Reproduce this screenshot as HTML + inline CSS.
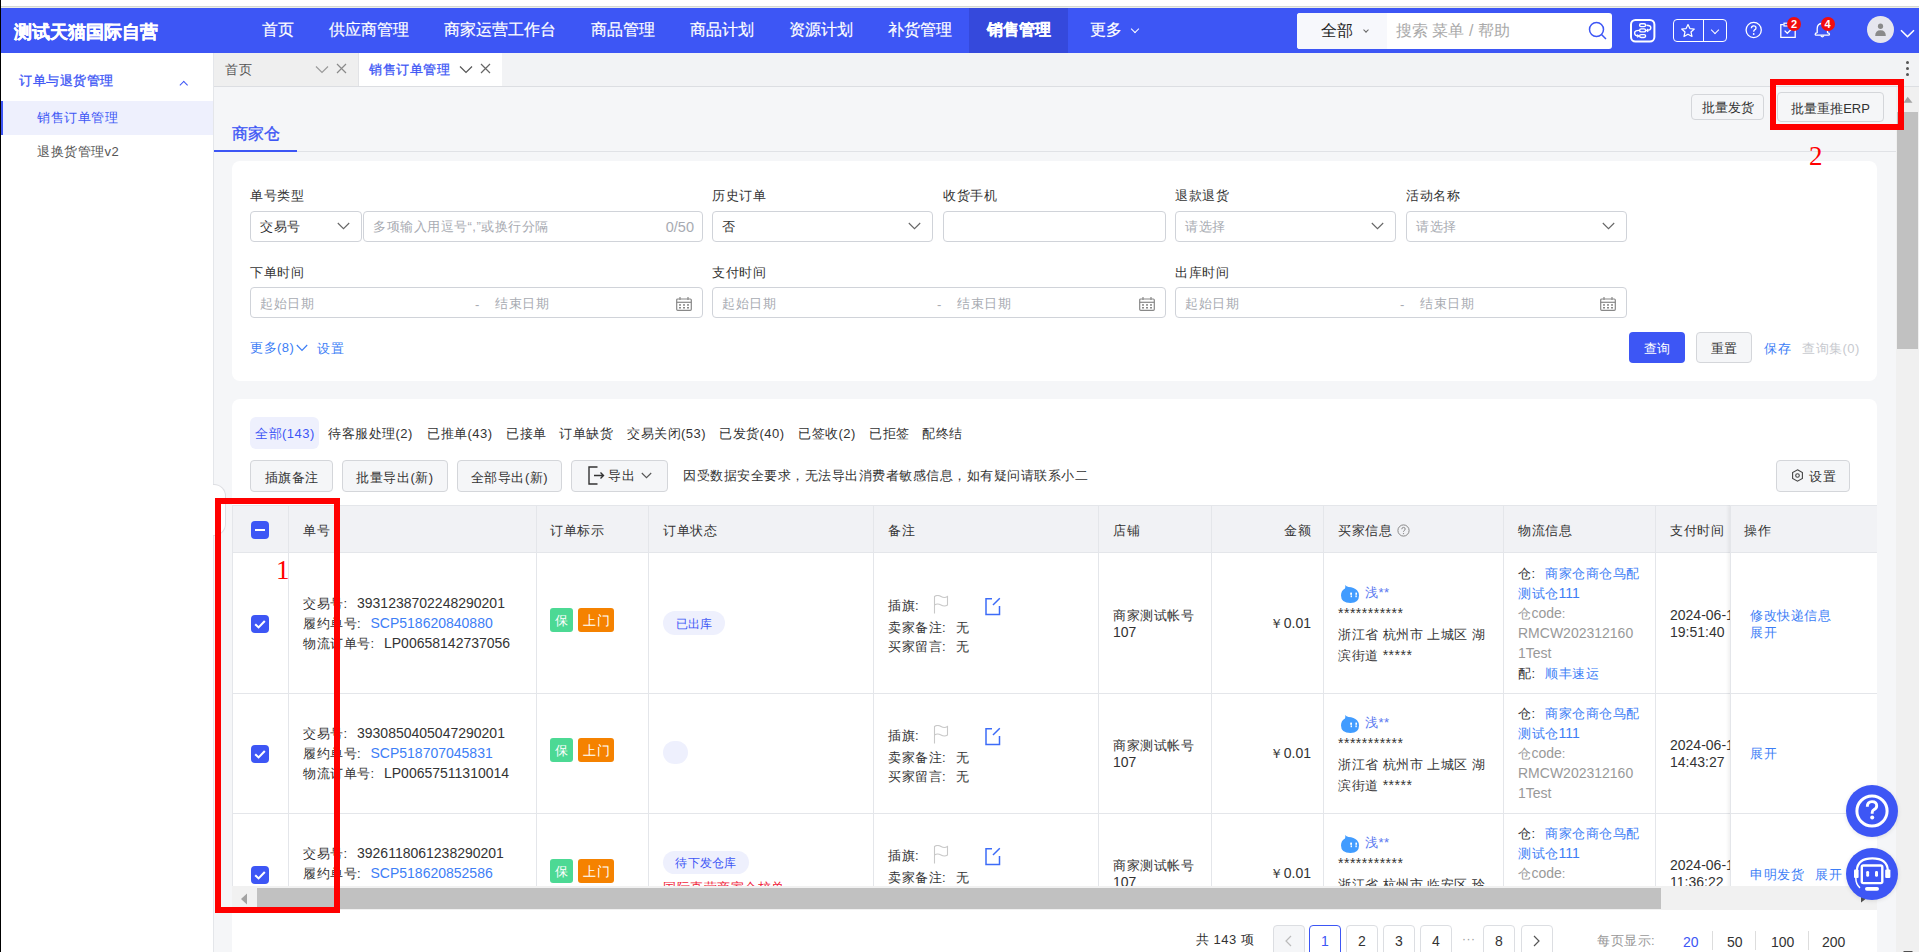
<!DOCTYPE html>
<html><head><meta charset="utf-8">
<style>
*{box-sizing:border-box;margin:0;padding:0}
html,body{width:1919px;height:952px;overflow:hidden}
body{position:relative;background:#f5f6f8;font-family:"Liberation Sans",sans-serif;color:#333;font-size:14px}
.a{position:absolute;white-space:nowrap}
#topstrip{left:0;top:0;width:1919px;height:8px;background:#fff}
#topline{left:0;top:6px;width:1919px;height:1px;background:#d6d8d4}
#topline2{left:0;top:7px;width:1919px;height:1px;background:#eceee6}
#hdr{left:0;top:8px;width:1919px;height:45px;background:#3d56f5}
#leftbar{left:0;top:0;width:1px;height:952px;background:#000;z-index:50}
.nav{top:7px;height:45px;line-height:45px;color:#fff;font-size:16px;-webkit-text-stroke:0.2px #fff}
#logo{left:14px;top:10px;height:45px;line-height:45px;color:#fff;font-size:18px;font-weight:bold;-webkit-text-stroke:0.3px #fff}
.btn{border:1px solid #d4d6da;border-radius:4px;background:#f5f6f8;text-align:center;color:#333}
.lbl{height:22px;line-height:22px;font-size:13px;letter-spacing:0.5px;color:#333}
.val{height:22px;line-height:22px;font-size:13px;letter-spacing:0.5px;color:#333}
.ph{height:22px;line-height:22px;font-size:13px;letter-spacing:0.5px;color:#a8abb2}
.lnk{height:22px;line-height:22px;font-size:13px;letter-spacing:0.5px;color:#3d7ef6}
.dis{height:22px;line-height:22px;font-size:13px;letter-spacing:0.5px;color:#c8cacf}
.inp{border:1px solid #d0d3d9;border-radius:4px;background:#fff}
.td{height:20px;line-height:20px;font-size:13px;letter-spacing:0.5px;color:#333}
.pg{top:925px;width:32px;height:32px;border:1px solid #dcdee2;border-radius:4px;background:#fff;text-align:center;line-height:31px;font-size:14px;color:#333}
.c{font-style:normal;display:inline-block;width:13.5px;letter-spacing:0}
.n{font-weight:normal;font-size:14px;letter-spacing:0;line-height:0}
</style></head><body>
<div class="a" id="topstrip"></div>
<div class="a" id="topline"></div>
<div class="a" id="topline2"></div>
<div class="a" id="hdr"></div>
<div class="a" id="logo">测试天猫国际自营</div>
<div class="a nav" style="left:262px">首页</div>
<div class="a nav" style="left:329px">供应商管理</div>
<div class="a nav" style="left:444px">商家运营工作台</div>
<div class="a nav" style="left:591px">商品管理</div>
<div class="a nav" style="left:690px">商品计划</div>
<div class="a nav" style="left:789px">资源计划</div>
<div class="a nav" style="left:888px">补货管理</div>
<div class="a" style="left:969px;top:8px;width:99px;height:45px;background:#3549dc"></div>
<div class="a nav" style="left:987px;font-weight:bold">销售管理</div>
<div class="a nav" style="left:1090px">更多</div>

<!-- header right -->
<div class="a" style="left:1132px;top:25.5px;width:6px;height:6px;border-right:1.6px solid #fff;border-bottom:1.6px solid #fff;transform:rotate(45deg)"></div>
<div class="a" style="left:1297px;top:13px;width:315px;height:36px;background:#fff;border-radius:3px"></div>
<div class="a" style="left:1297px;top:13px;width:90px;height:36px;background:#f7f8fc;border-radius:3px 0 0 3px"></div>
<div class="a" style="left:1321px;top:13px;height:36px;line-height:36px;font-size:16px;color:#222">全部</div>
<div class="a" style="left:1364px;top:28px;width:4px;height:4px;border-right:1px solid #666;border-bottom:1px solid #666;transform:rotate(45deg)"></div>
<div class="a" style="left:1396px;top:13px;height:36px;line-height:36px;font-size:16px;color:#aaa">搜索 菜单 / 帮助</div>
<svg class="a" style="left:1588px;top:21px" width="20" height="20" viewBox="0 0 20 20"><circle cx="8.5" cy="8.5" r="7" fill="none" stroke="#3d56f5" stroke-width="1.5"/><line x1="13.5" y1="13.5" x2="18" y2="18" stroke="#3d56f5" stroke-width="1.5"/></svg>
<!-- workflow icon -->
<svg class="a" style="left:1630px;top:19px" width="26" height="24" viewBox="0 0 26 24"><rect x="1" y="1" width="23.4" height="21.6" rx="4.5" fill="none" stroke="#fff" stroke-width="2"/><rect x="9.6" y="4.8" width="6" height="2.8" rx="1.4" fill="none" stroke="#fff" stroke-width="1.4"/><rect x="9.6" y="9.9" width="6" height="3" rx="1.5" fill="none" stroke="#fff" stroke-width="1.4"/><rect x="9.6" y="15.6" width="6" height="2.9" rx="1.45" fill="none" stroke="#fff" stroke-width="1.4"/><path d="M16.4 6.2 Q20.8 6.2 20.8 8.8 Q20.8 11.4 17 11.4" fill="none" stroke="#fff" stroke-width="1.4"/><path d="M18.2 10 L16.6 11.4 L18.2 12.8" fill="none" stroke="#fff" stroke-width="1.2"/><path d="M9 11.4 Q4.6 11.4 4.6 14.1 Q4.6 17 8.6 17" fill="none" stroke="#fff" stroke-width="1.4"/><path d="M7.2 15.6 L8.8 17 L7.2 18.4" fill="none" stroke="#fff" stroke-width="1.2"/></svg>
<!-- star group -->
<div class="a" style="left:1673px;top:19px;width:54px;height:23px;border:1px solid #fff;border-radius:4px"></div>
<div class="a" style="left:1703px;top:19px;width:1px;height:23px;background:#fff"></div>
<svg class="a" style="left:1680px;top:23px" width="16" height="16" viewBox="0 0 16 16"><path d="M8 1.5 L9.9 5.6 L14.3 6 L11 9 L12 13.5 L8 11.2 L4 13.5 L5 9 L1.7 6 L6.1 5.6 Z" fill="none" stroke="#fff" stroke-width="1.2" stroke-linejoin="round"/></svg>
<div class="a" style="left:1712px;top:26.5px;width:6px;height:6px;border-right:1.2px solid #fff;border-bottom:1.2px solid #fff;transform:rotate(45deg)"></div>
<!-- help -->
<svg class="a" style="left:1745px;top:21px" width="18" height="18" viewBox="0 0 18 18"><circle cx="8.7" cy="9" r="7.6" fill="none" stroke="#fff" stroke-width="1.3"/><path d="M6.4 7.2 Q6.4 4.8 8.7 4.8 Q11 4.8 11 6.9 Q11 8.2 9.6 8.9 Q8.7 9.4 8.7 10.8" fill="none" stroke="#fff" stroke-width="1.3"/><circle cx="8.7" cy="13" r="0.9" fill="#fff"/></svg>
<!-- clipboard -->
<svg class="a" style="left:1779px;top:21px" width="18" height="18" viewBox="0 0 18 18"><path d="M4.6 3.6 H1.8 V16.3 H16.2 V3.6 H13.4" fill="none" stroke="#fff" stroke-width="1.3"/><rect x="5" y="2.2" width="8" height="2.8" fill="none" stroke="#fff" stroke-width="1.2"/><path d="M5.6 9.6 L8.3 12.3 L12.6 8" fill="none" stroke="#fff" stroke-width="1.3"/></svg>
<div class="a" style="left:1787px;top:17px;width:14px;height:14px;border-radius:7px;background:#f20d0d;color:#fff;font-size:11px;line-height:14px;text-align:center;font-weight:bold">2</div>
<!-- bell -->
<svg class="a" style="left:1814px;top:21px" width="18" height="18" viewBox="0 0 18 18"><path d="M3.2 11.5 V7.5 Q3.2 2.5 8.35 2.5 Q13.5 2.5 13.5 7.5 V11.5 Q15.5 12 15.5 13.2 Q15.5 14.2 14.3 14.2 H2.4 Q1.2 14.2 1.2 13.2 Q1.2 12 3.2 11.5 Z" fill="none" stroke="#fff" stroke-width="1.3" stroke-linejoin="round"/><path d="M6.8 14.6 Q8.35 17 9.9 14.6" fill="none" stroke="#fff" stroke-width="1.2"/></svg>
<div class="a" style="left:1820.5px;top:17px;width:14px;height:14px;border-radius:7px;background:#f20d0d;color:#fff;font-size:11px;line-height:14px;text-align:center;font-weight:bold">4</div>
<!-- avatar -->
<div class="a" style="left:1867px;top:16px;width:27px;height:27px;border-radius:50%;background:#e6e6ee"></div>
<svg class="a" style="left:1872px;top:22px" width="17" height="15" viewBox="0 0 17 15"><path d="M5.9 4.3 Q5.9 1.6 8.5 1.6 Q11.1 1.6 11.1 4.3 Q11.1 7 8.5 7 Q5.9 7 5.9 4.3 Z" fill="#8a8a8a"/><path d="M3.2 14 Q3.2 8.2 8.5 8.2 Q13.8 8.2 13.8 14 Z" fill="#8a8a8a"/></svg>
<svg class="a" style="left:1899.5px;top:28.5px" width="15" height="9" viewBox="0 0 15 9"><path d="M1 1.2 L7.5 7.6 L14 1.2" fill="none" stroke="#fff" stroke-width="1.5"/></svg>
<!-- sidebar -->
<div class="a" style="left:0;top:53px;width:214px;height:899px;background:#fff;border-right:1px solid #e4e6ea"></div>
<div class="a" style="left:19px;top:70px;height:22px;line-height:22px;font-size:13px;letter-spacing:0.5px;color:#3d56f5;-webkit-text-stroke:0.3px #3d56f5">订单与退货管理</div>
<div class="a" style="left:180.5px;top:81.5px;width:5.5px;height:5.5px;border-left:1.1px solid #3d56f5;border-top:1.1px solid #3d56f5;transform:rotate(45deg)"></div>
<div class="a" style="left:1px;top:101px;width:212px;height:34px;background:#eef0fd;border-left:2px solid #3d56f5"></div>
<div class="a" style="left:37px;top:107px;height:22px;line-height:22px;font-size:13px;letter-spacing:0.5px;color:#3d56f5">销售订单管理</div>
<div class="a" style="left:37px;top:141px;height:22px;line-height:22px;font-size:13px;letter-spacing:0.5px;color:#555">退换货管理v2</div>
<!-- tab bar -->
<div class="a" style="left:214px;top:53px;width:1705px;height:34px;background:#f2f3f5;border-bottom:1px solid #dcdee2"></div>
<div class="a" style="left:214px;top:53px;width:144px;height:34px;background:#efefef;border-bottom:1px solid #dcdee2"></div>
<div class="a" style="left:225px;top:60px;height:20px;line-height:20px;font-size:13px;letter-spacing:0.5px;color:#555">首页</div>
<div class="a" style="left:358px;top:53px;width:144px;height:33px;background:#fff;border-left:1px solid #e2e3e6"></div>
<div class="a" style="left:369px;top:60px;height:20px;line-height:20px;font-size:13px;letter-spacing:0.5px;color:#3d56f5;-webkit-text-stroke:0.3px #3d56f5">销售订单管理</div>
<svg class="a" style="left:315px;top:65px" width="14" height="9" viewBox="0 0 14 9"><path d="M1 1.5 L7 7.5 L13 1.5" fill="none" stroke="#9a9a9a" stroke-width="1.2"/></svg>
<svg class="a" style="left:336px;top:63px" width="11" height="11" viewBox="0 0 11 11"><path d="M1 1 L10 10 M10 1 L1 10" fill="none" stroke="#8a8a8a" stroke-width="1.2"/></svg>
<svg class="a" style="left:459px;top:65px" width="14" height="9" viewBox="0 0 14 9"><path d="M1 1.5 L7 7.5 L13 1.5" fill="none" stroke="#555" stroke-width="1.2"/></svg>
<svg class="a" style="left:480px;top:63px" width="11" height="11" viewBox="0 0 11 11"><path d="M1 1 L10 10 M10 1 L1 10" fill="none" stroke="#666" stroke-width="1.2"/></svg>
<div class="a" style="left:1906px;top:61px;width:3px;height:3px;border-radius:2px;background:#555"></div>
<div class="a" style="left:1906px;top:67px;width:3px;height:3px;border-radius:2px;background:#555"></div>
<div class="a" style="left:1906px;top:73px;width:3px;height:3px;border-radius:2px;background:#555"></div>
<!-- sub tab -->
<div class="a" style="left:214px;top:151px;width:1683px;height:1px;background:#e0e2e6"></div>
<div class="a" style="left:232px;top:122px;height:24px;line-height:24px;font-size:16px;color:#3d56f5;-webkit-text-stroke:0.35px #3d56f5">商家仓</div>
<div class="a" style="left:214px;top:150px;width:83px;height:2px;background:#3d56f5"></div>
<div class="a btn" style="left:1691px;top:94px;width:73px;height:26px;line-height:26px;font-size:13px">批量发货</div>
<div class="a btn" style="left:1777px;top:92px;width:107px;height:30px;line-height:31px;font-size:13px">批量重推ERP</div>
<!-- filter card -->
<div class="a" style="left:232px;top:161px;width:1645px;height:220px;background:#fff;border-radius:8px"></div>
<div class="a lbl" style="left:250px;top:185px">单号类型</div>
<div class="a lbl" style="left:712px;top:185px">历史订单</div>
<div class="a lbl" style="left:943px;top:185px">收货手机</div>
<div class="a lbl" style="left:1175px;top:185px">退款退货</div>
<div class="a lbl" style="left:1406px;top:185px">活动名称</div>
<div class="a inp" style="left:250px;top:211px;width:112px;height:31px"></div>
<div class="a val" style="left:260px;top:216px">交易号</div>
<svg class="a" style="left:337px;top:222px" width="13" height="8" viewBox="0 0 13 8"><path d="M0.8 1 L6.5 6.7 L12.2 1" fill="none" stroke="#666" stroke-width="1.1"/></svg>
<div class="a inp" style="left:363px;top:211px;width:340px;height:31px"></div>
<div class="a ph" style="left:373px;top:216px">多项输入用逗号“,”或换行分隔</div>
<div class="a ph" style="left:600px;width:94px;text-align:right;top:216px;font-size:14.5px;letter-spacing:0">0/50</div>
<div class="a inp" style="left:712px;top:211px;width:221px;height:31px"></div>
<div class="a val" style="left:722px;top:216px">否</div>
<svg class="a" style="left:908px;top:222px" width="13" height="8" viewBox="0 0 13 8"><path d="M0.8 1 L6.5 6.7 L12.2 1" fill="none" stroke="#666" stroke-width="1.1"/></svg>
<div class="a inp" style="left:943px;top:211px;width:223px;height:31px"></div>
<div class="a inp" style="left:1175px;top:211px;width:221px;height:31px"></div>
<div class="a ph" style="left:1185px;top:216px">请选择</div>
<svg class="a" style="left:1371px;top:222px" width="13" height="8" viewBox="0 0 13 8"><path d="M0.8 1 L6.5 6.7 L12.2 1" fill="none" stroke="#666" stroke-width="1.1"/></svg>
<div class="a inp" style="left:1406px;top:211px;width:221px;height:31px"></div>
<div class="a ph" style="left:1416px;top:216px">请选择</div>
<svg class="a" style="left:1602px;top:222px" width="13" height="8" viewBox="0 0 13 8"><path d="M0.8 1 L6.5 6.7 L12.2 1" fill="none" stroke="#666" stroke-width="1.1"/></svg>
<div class="a lbl" style="left:250px;top:262px">下单时间</div>
<div class="a lbl" style="left:712px;top:262px">支付时间</div>
<div class="a lbl" style="left:1175px;top:262px">出库时间</div>
<div class="a inp" style="left:250px;top:287px;width:453px;height:31px"></div>
<div class="a ph" style="left:260px;top:293px">起始日期</div>
<div class="a ph" style="left:475px;top:294px">-</div>
<div class="a ph" style="left:495px;top:293px">结束日期</div>
<svg class="a" style="left:676px;top:297px" width="16" height="14" viewBox="0 0 16 14"><rect x="0.7" y="2" width="14.6" height="11.3" rx="1" fill="none" stroke="#888" stroke-width="1.2"/><line x1="0.7" y1="5.3" x2="15.3" y2="5.3" stroke="#888" stroke-width="1.2"/><line x1="4" y1="0" x2="4" y2="3" stroke="#888" stroke-width="1.2"/><line x1="12" y1="0" x2="12" y2="3" stroke="#888" stroke-width="1.2"/><rect x="3" y="7.2" width="2" height="1.5" fill="#888"/><rect x="7" y="7.2" width="2" height="1.5" fill="#888"/><rect x="11" y="7.2" width="2" height="1.5" fill="#888"/><rect x="3" y="10" width="2" height="1.5" fill="#888"/><rect x="7" y="10" width="2" height="1.5" fill="#888"/><rect x="11" y="10" width="2" height="1.5" fill="#888"/></svg>
<div class="a inp" style="left:712px;top:287px;width:454px;height:31px"></div>
<div class="a ph" style="left:722px;top:293px">起始日期</div>
<div class="a ph" style="left:937px;top:294px">-</div>
<div class="a ph" style="left:957px;top:293px">结束日期</div>
<svg class="a" style="left:1139px;top:297px" width="16" height="14" viewBox="0 0 16 14"><rect x="0.7" y="2" width="14.6" height="11.3" rx="1" fill="none" stroke="#888" stroke-width="1.2"/><line x1="0.7" y1="5.3" x2="15.3" y2="5.3" stroke="#888" stroke-width="1.2"/><line x1="4" y1="0" x2="4" y2="3" stroke="#888" stroke-width="1.2"/><line x1="12" y1="0" x2="12" y2="3" stroke="#888" stroke-width="1.2"/><rect x="3" y="7.2" width="2" height="1.5" fill="#888"/><rect x="7" y="7.2" width="2" height="1.5" fill="#888"/><rect x="11" y="7.2" width="2" height="1.5" fill="#888"/><rect x="3" y="10" width="2" height="1.5" fill="#888"/><rect x="7" y="10" width="2" height="1.5" fill="#888"/><rect x="11" y="10" width="2" height="1.5" fill="#888"/></svg>
<div class="a inp" style="left:1175px;top:287px;width:452px;height:31px"></div>
<div class="a ph" style="left:1185px;top:293px">起始日期</div>
<div class="a ph" style="left:1400px;top:294px">-</div>
<div class="a ph" style="left:1420px;top:293px">结束日期</div>
<svg class="a" style="left:1600px;top:297px" width="16" height="14" viewBox="0 0 16 14"><rect x="0.7" y="2" width="14.6" height="11.3" rx="1" fill="none" stroke="#888" stroke-width="1.2"/><line x1="0.7" y1="5.3" x2="15.3" y2="5.3" stroke="#888" stroke-width="1.2"/><line x1="4" y1="0" x2="4" y2="3" stroke="#888" stroke-width="1.2"/><line x1="12" y1="0" x2="12" y2="3" stroke="#888" stroke-width="1.2"/><rect x="3" y="7.2" width="2" height="1.5" fill="#888"/><rect x="7" y="7.2" width="2" height="1.5" fill="#888"/><rect x="11" y="7.2" width="2" height="1.5" fill="#888"/><rect x="3" y="10" width="2" height="1.5" fill="#888"/><rect x="7" y="10" width="2" height="1.5" fill="#888"/><rect x="11" y="10" width="2" height="1.5" fill="#888"/></svg>
<div class="a lnk" style="left:250px;top:337px">更多(8)</div>
<svg class="a" style="left:296px;top:344px" width="12" height="8" viewBox="0 0 12 8"><path d="M0.8 1 L6 6.3 L11.2 1" fill="none" stroke="#3d7ef6" stroke-width="1.2"/></svg>
<div class="a lnk" style="left:317px;top:338px">设置</div>
<div class="a" style="left:1629px;top:332px;width:56px;height:31px;border-radius:4px;background:#3d56f5;color:#fff;font-size:13px;letter-spacing:0.5px;line-height:33px;text-align:center">查询</div>
<div class="a btn" style="left:1696px;top:332px;width:56px;height:31px;line-height:31px;font-size:13px;letter-spacing:0.5px">重置</div>
<div class="a lnk" style="left:1764px;top:338px">保存</div>
<div class="a dis" style="left:1802px;top:338px">查询集(0)</div>
<!-- list card -->
<div class="a" style="left:232px;top:399px;width:1645px;height:560px;background:#fff;border-radius:8px"></div>
<div class="a" style="left:250px;top:417px;width:69px;height:32px;border-radius:6px;background:#eef0fd"></div>
<div class="a td" style="left:255px;top:424px;color:#3d56f5">全部(143)</div>
<div class="a td" style="left:328px;top:424px;color:#333">待客服处理(2)</div>
<div class="a td" style="left:427px;top:424px;color:#333">已推单(43)</div>
<div class="a td" style="left:506px;top:424px;color:#333">已接单</div>
<div class="a td" style="left:559px;top:424px;color:#333">订单缺货</div>
<div class="a td" style="left:627px;top:424px;color:#333">交易关闭(53)</div>
<div class="a td" style="left:719px;top:424px;color:#333">已发货(40)</div>
<div class="a td" style="left:798px;top:424px;color:#333">已签收(2)</div>
<div class="a td" style="left:869px;top:424px;color:#333">已拒签</div>
<div class="a td" style="left:922px;top:424px;color:#333">配终结</div>
<div class="a btn" style="left:250px;top:460px;width:83px;height:32px;line-height:33px;font-size:13px;letter-spacing:0.5px">插旗备注</div>
<div class="a btn" style="left:342px;top:460px;width:106px;height:32px;line-height:33px;font-size:13px;letter-spacing:0.5px">批量导出(新)</div>
<div class="a btn" style="left:457px;top:460px;width:105px;height:32px;line-height:33px;font-size:13px;letter-spacing:0.5px">全部导出(新)</div>
<div class="a btn" style="left:571px;top:460px;width:97px;height:32px"></div>
<svg class="a" style="left:588px;top:466px" width="17" height="19" viewBox="0 0 17 19"><path d="M9.5 1 H1 V18 H9.5" fill="none" stroke="#333" stroke-width="1.4"/><path d="M6 9.5 H15.5 M12.5 6.5 L15.5 9.5 L12.5 12.5" fill="none" stroke="#333" stroke-width="1.4"/></svg>
<div class="a td" style="left:608px;top:466px;">导出</div>
<svg class="a" style="left:641px;top:472px" width="11" height="7" viewBox="0 0 11 7"><path d="M0.8 1 L5.5 5.7 L10.2 1" fill="none" stroke="#555" stroke-width="1.1"/></svg>
<div class="a td" style="left:683px;top:466px;">因受数据安全要求，无法导出消费者敏感信息，如有疑问请联系小二</div>
<div class="a btn" style="left:1776px;top:460px;width:74px;height:32px"></div>
<svg class="a" style="left:1791px;top:468.5px" width="13" height="13" viewBox="0 0 13 13"><path d="M6.5 0.8 L11.4 3.6 V9.4 L6.5 12.2 L1.6 9.4 V3.6 Z" fill="none" stroke="#444" stroke-width="1.1"/><circle cx="6.5" cy="6.5" r="1.8" fill="none" stroke="#444" stroke-width="1.1"/></svg>
<div class="a td" style="left:1809px;top:467px;">设置</div>
<!-- table -->
<div class="a" style="left:232px;top:505px;width:1645px;height:381px;overflow:hidden">
<div class="a" style="left:0px;top:0px;width:1645px;height:48px;background:#f1f2f5;border-top:1px solid #e4e6ea;border-bottom:1px solid #e4e6ea"></div>
<div class="a" style="left:0px;top:188px;width:1645px;height:1px;background:#e4e6ea"></div>
<div class="a" style="left:0px;top:308px;width:1645px;height:1px;background:#e4e6ea"></div>
<div class="a" style="left:0px;top:0px;width:1px;height:400px;background:#e4e6ea"></div>
<div class="a" style="left:56px;top:0px;width:1px;height:400px;background:#e4e6ea"></div>
<div class="a" style="left:304px;top:0px;width:1px;height:400px;background:#e4e6ea"></div>
<div class="a" style="left:416px;top:0px;width:1px;height:400px;background:#e4e6ea"></div>
<div class="a" style="left:641px;top:0px;width:1px;height:400px;background:#e4e6ea"></div>
<div class="a" style="left:866px;top:0px;width:1px;height:400px;background:#e4e6ea"></div>
<div class="a" style="left:979px;top:0px;width:1px;height:400px;background:#e4e6ea"></div>
<div class="a" style="left:1091px;top:0px;width:1px;height:400px;background:#e4e6ea"></div>
<div class="a" style="left:1271px;top:0px;width:1px;height:400px;background:#e4e6ea"></div>
<div class="a" style="left:1423px;top:0px;width:1px;height:400px;background:#e4e6ea"></div>
<div class="a td" style="left:71px;top:16px;">单号</div>
<div class="a td" style="left:318px;top:16px;">订单标示</div>
<div class="a td" style="left:431px;top:16px;">订单状态</div>
<div class="a td" style="left:656px;top:16px;">备注</div>
<div class="a td" style="left:881px;top:16px;">店铺</div>
<div class="a td" style="left:1106px;top:16px;">买家信息</div>
<div class="a td" style="left:1286px;top:16px;">物流信息</div>
<div class="a td" style="left:1438px;top:16px;">支付时间</div>
<div class="a td" style="left:879px;top:16px;width:200px;text-align:right;letter-spacing:0;letter-spacing:0.5px;padding-right:0">金额</div>
<div class="a" style="left:19px;top:16px;width:18px;height:18px;background:#3d56f5;border-radius:4px"></div>
<div class="a" style="left:23px;top:24px;width:10px;height:2px;background:#fff"></div>
<svg class="a" style="left:1165px;top:19px" width="13" height="13" viewBox="0 0 13 13"><circle cx="6.5" cy="6.5" r="5.6" fill="none" stroke="#888" stroke-width="1"/><path d="M4.8 5.2 Q4.8 3.4 6.5 3.4 Q8.2 3.4 8.2 5 Q8.2 6 7.2 6.5 Q6.5 6.9 6.5 7.8" fill="none" stroke="#888" stroke-width="1"/><circle cx="6.5" cy="9.6" r="0.7" fill="#888"/></svg>
<div class="a" style="left:19px;top:110px;width:18px;height:18px;background:#3d56f5;border-radius:4px"></div>
<svg class="a" style="left:19px;top:110px" width="18" height="18" viewBox="0 0 18 18"><path d="M4.2 9.2 L7.6 12.4 L13.8 6" fill="none" stroke="#fff" stroke-width="2.1"/></svg>
<div class="a td" style="left:71px;top:89px;">交易号<i class="c">:</i><b class="n">3931238702248290201</b></div>
<div class="a td" style="left:71px;top:109px;">履约单号<i class="c">:</i><span style="color:#3d7ef6"><b class="n">SCP518620840880</b></span></div>
<div class="a td" style="left:71px;top:129px;">物流订单号<i class="c">:</i><b class="n">LP00658142737056</b></div>
<div class="a" style="left:318px;top:103px;width:23px;height:24px;background:#4cd994;border-radius:3px"></div>
<div class="a td" style="left:323px;top:106px;color:#fff">保</div>
<div class="a" style="left:346px;top:103px;width:36px;height:24px;background:#f58200;border-radius:3px"></div>
<div class="a td" style="left:351px;top:106px;color:#fff">上门</div>
<div class="a" style="left:431px;top:106px;width:62px;height:24px;background:#eef0fd;border-radius:12px"></div>
<div class="a td" style="left:431px;top:109px;width:62px;text-align:center;font-size:12px;letter-spacing:0.3px;color:#3d56f5">已出库</div>
<div class="a td" style="left:656px;top:91px;">插旗<span style="letter-spacing:0">:</span></div>
<svg class="a" style="left:701px;top:90px" width="16" height="19" viewBox="0 0 16 19"><path d="M1.5 18.5 V1.5 Q4.5 -0.5 8 1.5 Q11.5 3.5 14.5 1.5 V10 Q11.5 12 8 10 Q4.5 8 1.5 10" fill="none" stroke="#c8c8c8" stroke-width="1.1"/></svg>
<svg class="a" style="left:753px;top:92px" width="16" height="19" viewBox="0 0 16 19"><path d="M7 1.8 H1 V17.5 H14.5 V9" fill="none" stroke="#3d6cf7" stroke-width="1.5"/><path d="M8 8 L14.8 1.2" fill="none" stroke="#3d6cf7" stroke-width="1.5"/></svg>
<div class="a td" style="left:656px;top:113px;">卖家备注<i class="c">:</i>无</div>
<div class="a td" style="left:656px;top:132px;">买家留言<i class="c">:</i>无</div>
<div class="a td" style="left:881px;top:101px;">商家测试帐号</div>
<div class="a td" style="left:881px;top:118px;"><b class="n">107</b></div>
<div class="a td" style="left:879px;top:109px;width:200px;text-align:right;letter-spacing:0;letter-spacing:0.5px">￥<b class="n">0.01</b></div>
<svg class="a" style="left:1108px;top:79px" width="20" height="20" viewBox="0 0 20 20"><path d="M5.2 1 Q6.2 2.6 8.6 2.9 Q14 3.2 17 6.2 Q19 8.5 19 11.5 Q19 19 10.5 19 Q1 19 1 11.5 Q1 6.5 5 4.5 Q5.6 3 5.2 1 Z" fill="#419cff"/><rect x="10.2" y="8.6" width="1.8" height="2.2" fill="#fff"/><rect x="10.6" y="11.4" width="1.4" height="1.8" fill="#fff"/><rect x="15.4" y="8.6" width="1.6" height="2.2" fill="#fff"/><rect x="15.4" y="11.4" width="1.4" height="1.8" fill="#fff"/></svg>
<div class="a td" style="left:1133px;top:78px;color:#5a78f0">浅**</div>
<div class="a td" style="left:1106px;top:98px;font-size:14px;letter-spacing:0.5px">***********</div>
<div class="a td" style="left:1106px;top:120px;">浙江省 杭州市 上城区 湖</div>
<div class="a td" style="left:1106px;top:140px;">滨街道 <span style="font-size:14px">*****</span></div>
<div class="a td" style="left:1286px;top:59px;">仓<i class="c">:</i><span style="color:#3d7ef6">商家仓商仓鸟配</span></div>
<div class="a td" style="left:1286px;top:79px;color:#3d7ef6">测试仓<b class="n">111</b></div>
<div class="a td" style="left:1286px;top:99px;color:#999">仓<b class="n">code</b><i class="c">:</i></div>
<div class="a td" style="left:1286px;top:119px;color:#999"><b class="n">RMCW202312160</b></div>
<div class="a td" style="left:1286px;top:139px;color:#999"><b class="n">1Test</b></div>
<div class="a td" style="left:1286px;top:159px;">配<i class="c">:</i><span style="color:#3d7ef6">顺丰速运</span></div>
<div class="a td" style="left:1438px;top:101px;"><b class="n">2024-06-1</b></div>
<div class="a td" style="left:1438px;top:118px;"><b class="n">19:51:40</b></div>
<div class="a" style="left:19px;top:240px;width:18px;height:18px;background:#3d56f5;border-radius:4px"></div>
<svg class="a" style="left:19px;top:240px" width="18" height="18" viewBox="0 0 18 18"><path d="M4.2 9.2 L7.6 12.4 L13.8 6" fill="none" stroke="#fff" stroke-width="2.1"/></svg>
<div class="a td" style="left:71px;top:219px;">交易号<i class="c">:</i><b class="n">3930850405047290201</b></div>
<div class="a td" style="left:71px;top:239px;">履约单号<i class="c">:</i><span style="color:#3d7ef6"><b class="n">SCP518707045831</b></span></div>
<div class="a td" style="left:71px;top:259px;">物流订单号<i class="c">:</i><b class="n">LP00657511310014</b></div>
<div class="a" style="left:318px;top:233px;width:23px;height:24px;background:#4cd994;border-radius:3px"></div>
<div class="a td" style="left:323px;top:236px;color:#fff">保</div>
<div class="a" style="left:346px;top:233px;width:36px;height:24px;background:#f58200;border-radius:3px"></div>
<div class="a td" style="left:351px;top:236px;color:#fff">上门</div>
<div class="a" style="left:431px;top:236px;width:25px;height:23px;background:#eef0fd;border-radius:12px"></div>
<div class="a td" style="left:656px;top:221px;">插旗<span style="letter-spacing:0">:</span></div>
<svg class="a" style="left:701px;top:220px" width="16" height="19" viewBox="0 0 16 19"><path d="M1.5 18.5 V1.5 Q4.5 -0.5 8 1.5 Q11.5 3.5 14.5 1.5 V10 Q11.5 12 8 10 Q4.5 8 1.5 10" fill="none" stroke="#c8c8c8" stroke-width="1.1"/></svg>
<svg class="a" style="left:753px;top:222px" width="16" height="19" viewBox="0 0 16 19"><path d="M7 1.8 H1 V17.5 H14.5 V9" fill="none" stroke="#3d6cf7" stroke-width="1.5"/><path d="M8 8 L14.8 1.2" fill="none" stroke="#3d6cf7" stroke-width="1.5"/></svg>
<div class="a td" style="left:656px;top:243px;">卖家备注<i class="c">:</i>无</div>
<div class="a td" style="left:656px;top:262px;">买家留言<i class="c">:</i>无</div>
<div class="a td" style="left:881px;top:231px;">商家测试帐号</div>
<div class="a td" style="left:881px;top:248px;"><b class="n">107</b></div>
<div class="a td" style="left:879px;top:239px;width:200px;text-align:right;letter-spacing:0;letter-spacing:0.5px">￥<b class="n">0.01</b></div>
<svg class="a" style="left:1108px;top:209px" width="20" height="20" viewBox="0 0 20 20"><path d="M5.2 1 Q6.2 2.6 8.6 2.9 Q14 3.2 17 6.2 Q19 8.5 19 11.5 Q19 19 10.5 19 Q1 19 1 11.5 Q1 6.5 5 4.5 Q5.6 3 5.2 1 Z" fill="#419cff"/><rect x="10.2" y="8.6" width="1.8" height="2.2" fill="#fff"/><rect x="10.6" y="11.4" width="1.4" height="1.8" fill="#fff"/><rect x="15.4" y="8.6" width="1.6" height="2.2" fill="#fff"/><rect x="15.4" y="11.4" width="1.4" height="1.8" fill="#fff"/></svg>
<div class="a td" style="left:1133px;top:208px;color:#5a78f0">浅**</div>
<div class="a td" style="left:1106px;top:228px;font-size:14px;letter-spacing:0.5px">***********</div>
<div class="a td" style="left:1106px;top:250px;">浙江省 杭州市 上城区 湖</div>
<div class="a td" style="left:1106px;top:270px;">滨街道 <span style="font-size:14px">*****</span></div>
<div class="a td" style="left:1286px;top:199px;">仓<i class="c">:</i><span style="color:#3d7ef6">商家仓商仓鸟配</span></div>
<div class="a td" style="left:1286px;top:219px;color:#3d7ef6">测试仓<b class="n">111</b></div>
<div class="a td" style="left:1286px;top:239px;color:#999">仓<b class="n">code</b><i class="c">:</i></div>
<div class="a td" style="left:1286px;top:259px;color:#999"><b class="n">RMCW202312160</b></div>
<div class="a td" style="left:1286px;top:279px;color:#999"><b class="n">1Test</b></div>
<div class="a td" style="left:1438px;top:231px;"><b class="n">2024-06-1</b></div>
<div class="a td" style="left:1438px;top:248px;"><b class="n">14:43:27</b></div>
<div class="a" style="left:19px;top:361px;width:18px;height:18px;background:#3d56f5;border-radius:4px"></div>
<svg class="a" style="left:19px;top:361px" width="18" height="18" viewBox="0 0 18 18"><path d="M4.2 9.2 L7.6 12.4 L13.8 6" fill="none" stroke="#fff" stroke-width="2.1"/></svg>
<div class="a td" style="left:71px;top:339px;">交易号<i class="c">:</i><b class="n">3926118061238290201</b></div>
<div class="a td" style="left:71px;top:359px;">履约单号<i class="c">:</i><span style="color:#3d7ef6"><b class="n">SCP518620852586</b></span></div>
<div class="a" style="left:318px;top:354px;width:23px;height:24px;background:#4cd994;border-radius:3px"></div>
<div class="a td" style="left:323px;top:357px;color:#fff">保</div>
<div class="a" style="left:346px;top:354px;width:36px;height:24px;background:#f58200;border-radius:3px"></div>
<div class="a td" style="left:351px;top:357px;color:#fff">上门</div>
<div class="a" style="left:431px;top:346px;width:86px;height:23px;background:#eef0fd;border-radius:12px"></div>
<div class="a td" style="left:431px;top:348px;width:86px;text-align:center;font-size:12px;letter-spacing:0.3px;color:#3d56f5">待下发仓库</div>
<div class="a td" style="left:431px;top:373px;color:#f0233a">国际直营商家仓校单</div>
<div class="a td" style="left:656px;top:341px;">插旗<span style="letter-spacing:0">:</span></div>
<svg class="a" style="left:701px;top:340px" width="16" height="19" viewBox="0 0 16 19"><path d="M1.5 18.5 V1.5 Q4.5 -0.5 8 1.5 Q11.5 3.5 14.5 1.5 V10 Q11.5 12 8 10 Q4.5 8 1.5 10" fill="none" stroke="#c8c8c8" stroke-width="1.1"/></svg>
<svg class="a" style="left:753px;top:342px" width="16" height="19" viewBox="0 0 16 19"><path d="M7 1.8 H1 V17.5 H14.5 V9" fill="none" stroke="#3d6cf7" stroke-width="1.5"/><path d="M8 8 L14.8 1.2" fill="none" stroke="#3d6cf7" stroke-width="1.5"/></svg>
<div class="a td" style="left:656px;top:363px;">卖家备注<i class="c">:</i>无</div>
<div class="a td" style="left:656px;top:382px;">买家留言<i class="c">:</i>无</div>
<div class="a td" style="left:881px;top:351px;">商家测试帐号</div>
<div class="a td" style="left:881px;top:368px;"><b class="n">107</b></div>
<div class="a td" style="left:879px;top:359px;width:200px;text-align:right;letter-spacing:0;letter-spacing:0.5px">￥<b class="n">0.01</b></div>
<svg class="a" style="left:1108px;top:329px" width="20" height="20" viewBox="0 0 20 20"><path d="M5.2 1 Q6.2 2.6 8.6 2.9 Q14 3.2 17 6.2 Q19 8.5 19 11.5 Q19 19 10.5 19 Q1 19 1 11.5 Q1 6.5 5 4.5 Q5.6 3 5.2 1 Z" fill="#419cff"/><rect x="10.2" y="8.6" width="1.8" height="2.2" fill="#fff"/><rect x="10.6" y="11.4" width="1.4" height="1.8" fill="#fff"/><rect x="15.4" y="8.6" width="1.6" height="2.2" fill="#fff"/><rect x="15.4" y="11.4" width="1.4" height="1.8" fill="#fff"/></svg>
<div class="a td" style="left:1133px;top:328px;color:#5a78f0">浅**</div>
<div class="a td" style="left:1106px;top:348px;font-size:14px;letter-spacing:0.5px">***********</div>
<div class="a td" style="left:1106px;top:370px;">浙江省 杭州市 临安区 玲</div>
<div class="a td" style="left:1106px;top:390px;">滨街道 <span style="font-size:14px">*****</span></div>
<div class="a td" style="left:1286px;top:319px;">仓<i class="c">:</i><span style="color:#3d7ef6">商家仓商仓鸟配</span></div>
<div class="a td" style="left:1286px;top:339px;color:#3d7ef6">测试仓<b class="n">111</b></div>
<div class="a td" style="left:1286px;top:359px;color:#999">仓<b class="n">code</b><i class="c">:</i></div>
<div class="a td" style="left:1438px;top:351px;"><b class="n">2024-06-1</b></div>
<div class="a td" style="left:1438px;top:368px;"><b class="n">11:36:22</b></div>
<div class="a" style="left:1498px;top:0px;width:147px;height:400px;background:#fff;border-left:1px solid #e4e6ea;box-shadow:-2px 0 3px rgba(0,0,0,0.06)"></div>
<div class="a" style="left:1499px;top:0px;width:146px;height:48px;background:#f1f2f5;border-top:1px solid #e4e6ea;border-bottom:1px solid #e4e6ea"></div>
<div class="a" style="left:1499px;top:188px;width:146px;height:1px;background:#e4e6ea"></div>
<div class="a" style="left:1499px;top:308px;width:146px;height:1px;background:#e4e6ea"></div>
<div class="a td" style="left:1512px;top:16px;">操作</div>
<div class="a td" style="left:1518px;top:101px;color:#3d7ef6">修改快递信息</div>
<div class="a td" style="left:1518px;top:118px;color:#3d7ef6">展开</div>
<div class="a td" style="left:1518px;top:239px;color:#3d7ef6">展开</div>
<div class="a td" style="left:1518px;top:360px;color:#3d7ef6">申明发货</div>
<div class="a td" style="left:1583px;top:360px;color:#3d7ef6">展开</div>
</div>
<div class="a" style="left:232px;top:886px;width:1645px;height:24px;background:#f1f1f1"></div>
<div class="a" style="left:257px;top:888px;width:1404px;height:21px;background:#c1c1c1"></div>
<svg class="a" style="left:240px;top:893px" width="8" height="12" viewBox="0 0 8 12"><path d="M7 0.5 L1 6 L7 11.5 Z" fill="#a3a3a3"/></svg>
<svg class="a" style="left:1860px;top:893px" width="8" height="10" viewBox="0 0 8 10"><path d="M1 0.5 L7 5 L1 9.5 Z" fill="#505050"/></svg>
<!-- pagination -->
<div class="a td" style="left:1196px;top:930px">共 143 项</div>
<div class="a pg" style="left:1273px;background:#f5f6f8"></div><svg class="a" style="left:1284px;top:935px" width="9" height="12" viewBox="0 0 9 12"><path d="M7 1 L2 6 L7 11" fill="none" stroke="#bbb" stroke-width="1.2"/></svg>
<div class="a pg" style="left:1309px;border-color:#3d56f5;color:#3d56f5">1</div>
<div class="a pg" style="left:1346px">2</div>
<div class="a pg" style="left:1383px">3</div>
<div class="a pg" style="left:1420px">4</div>
<div class="a td" style="left:1462px;top:929px;color:#999;font-size:12px">···</div>
<div class="a pg" style="left:1483px">8</div>
<div class="a pg" style="left:1521px"></div><svg class="a" style="left:1532px;top:935px" width="9" height="12" viewBox="0 0 9 12"><path d="M2 1 L7 6 L2 11" fill="none" stroke="#555" stroke-width="1.2"/></svg>
<div class="a td" style="left:1597px;top:931px;color:#999">每页显示<i class="c">:</i></div>
<div class="a td" style="left:1683px;top:932px;color:#3d56f5;font-size:14px;letter-spacing:0">20</div>
<div class="a" style="left:1712px;top:931px;width:1px;height:19px;background:#ddd"></div>
<div class="a td" style="left:1727px;top:932px;font-size:14px;letter-spacing:0">50</div>
<div class="a" style="left:1755px;top:931px;width:1px;height:19px;background:#ddd"></div>
<div class="a td" style="left:1771px;top:932px;font-size:14px;letter-spacing:0">100</div>
<div class="a" style="left:1808px;top:931px;width:1px;height:19px;background:#ddd"></div>
<div class="a td" style="left:1822px;top:932px;font-size:14px;letter-spacing:0">200</div>
<!-- v scrollbar -->
<div class="a" style="left:1896px;top:87px;width:23px;height:865px;background:#f0f0f0"></div>
<div class="a" style="left:1897px;top:112px;width:21px;height:237px;background:#c1c1c1"></div>
<svg class="a" style="left:1903px;top:96px" width="10" height="8" viewBox="0 0 10 8"><path d="M0.5 6.8 L4.7 0.8 L9.5 6.8 Z" fill="#a3a3a3"/></svg>
<svg class="a" style="left:1902px;top:948px" width="12" height="4" viewBox="0 0 12 4"><path d="M1 4 L11 4 L10 3 L2 3 Z" fill="#505050"/></svg>
<!-- floating -->
<div class="a" style="left:1846px;top:785px;width:52px;height:52px;border-radius:50%;background:#3d56f5;box-shadow:0 1px 4px rgba(0,0,0,0.10)"></div>
<svg class="a" style="left:1846px;top:785px" width="52" height="52" viewBox="0 0 52 52"><circle cx="26" cy="26" r="15.1" fill="none" stroke="#fff" stroke-width="3"/><path d="M21.3 21.8 Q21.3 16.6 26 16.6 Q30.7 16.6 30.7 20.8 Q30.7 23.4 28 24.6 Q26.2 25.4 26.2 27.5 V28.8" fill="none" stroke="#fff" stroke-width="2.9"/><circle cx="26.2" cy="32.6" r="2" fill="#fff"/></svg>
<div class="a" style="left:1846px;top:848px;width:52px;height:52px;border-radius:50%;background:#3d56f5;box-shadow:0 1px 4px rgba(0,0,0,0.10)"></div>
<svg class="a" style="left:1846px;top:848px" width="52" height="52" viewBox="0 0 52 52"><path d="M10.8 22.5 Q11.5 10.3 26.3 10.3 Q41.2 10.3 41.9 22.5" fill="none" stroke="#fff" stroke-width="2.2"/><rect x="8" y="21.4" width="4.6" height="8.5" rx="1" fill="#fff"/><rect x="39.2" y="21.4" width="5.2" height="8.5" rx="1" fill="#fff"/><rect x="15.8" y="17.5" width="20.5" height="17.6" rx="1.5" fill="none" stroke="#fff" stroke-width="2.4"/><rect x="20.2" y="22.9" width="2.9" height="5.9" rx="1.4" fill="#fff"/><rect x="29" y="22.9" width="3" height="5.9" rx="1.4" fill="#fff"/><rect x="19" y="39" width="14" height="3.7" rx="1.85" fill="#fff"/><path d="M9.8 29.5 Q9.8 36.5 14 39.8" fill="none" stroke="#fff" stroke-width="1.5"/></svg>
<div class="a" style="left:213px;top:484px;width:12.5px;height:52px;background:#fff;border:1px solid #dddee2;border-left:none;border-radius:0 12px 12px 0"></div>
<!-- annotations -->
<div class="a" style="left:215px;top:498px;width:125px;height:415px;border:6px solid #ff0000;z-index:40"></div>
<div class="a" style="left:276px;top:558px;font-family:'Liberation Serif',serif;font-size:27px;line-height:24px;color:#ff0000;z-index:40">1</div>
<div class="a" style="left:1770px;top:79px;width:134px;height:51px;border:6px solid #ff0000;z-index:40"></div>
<div class="a" style="left:1809px;top:144px;font-family:'Liberation Serif',serif;font-size:27px;line-height:24px;color:#ff0000;z-index:40">2</div>
<div class="a" id="leftbar"></div>
</body></html>
